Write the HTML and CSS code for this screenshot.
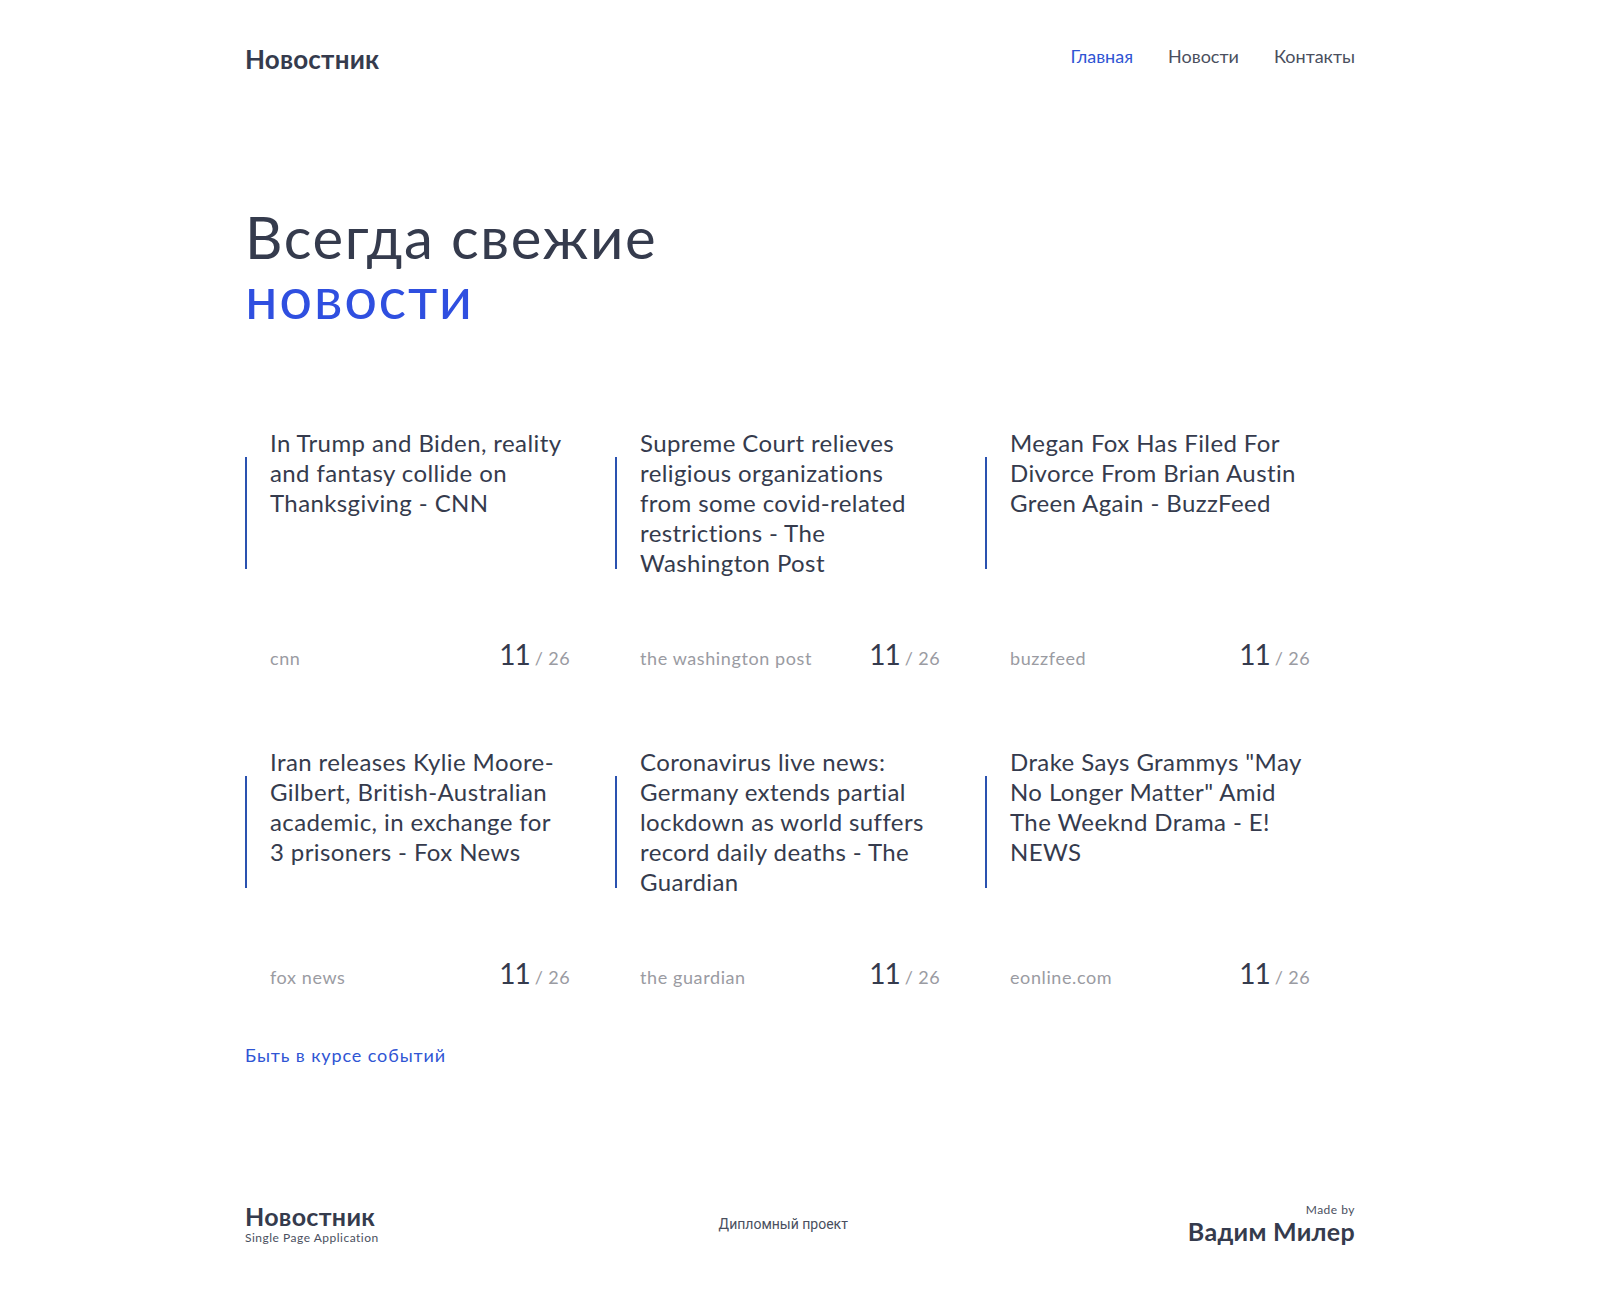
FILE: index.html
```html
<!DOCTYPE html>
<html lang="ru">
<head>
    <meta charset="UTF-8">
    <meta name="viewport" content="width=device-width, initial-scale=1.0">
    <title>Новостник</title>
    <link rel="stylesheet" href="styles.css">
</head>
<body>
    <div class="container">
        <header class="header">
            <a class="logo" href="#">Новостник</a>
            <nav class="nav">
                <a class="nav-link active" href="#">Главная</a>
                <a class="nav-link" href="#">Новости</a>
                <a class="nav-link" href="#">Контакты</a>
            </nav>
        </header>

        <section class="hero">
            <h1>Всегда свежие <span class="accent">новости</span></h1>
        </section>

        <section class="news">
            <article class="news-card">
                <h2 class="news-title">In Trump and Biden, reality and fantasy collide on Thanksgiving - CNN</h2>
                <div class="news-meta">
                    <span class="news-source">cnn</span>
                    <span class="news-date"><span class="day">11</span> / 26</span>
                </div>
            </article>
            <article class="news-card">
                <h2 class="news-title">Supreme Court relieves religious organizations from some covid-related restrictions - The Washington Post</h2>
                <div class="news-meta">
                    <span class="news-source">the washington post</span>
                    <span class="news-date"><span class="day">11</span> / 26</span>
                </div>
            </article>
            <article class="news-card">
                <h2 class="news-title">Megan Fox Has Filed For Divorce From Brian Austin Green Again - BuzzFeed</h2>
                <div class="news-meta">
                    <span class="news-source">buzzfeed</span>
                    <span class="news-date"><span class="day">11</span> / 26</span>
                </div>
            </article>
            <article class="news-card">
                <h2 class="news-title">Iran releases Kylie Moore-Gilbert, British-Australian academic, in exchange for 3 prisoners - Fox News</h2>
                <div class="news-meta">
                    <span class="news-source">fox news</span>
                    <span class="news-date"><span class="day">11</span> / 26</span>
                </div>
            </article>
            <article class="news-card">
                <h2 class="news-title">Coronavirus live news: Germany extends partial lockdown as world suffers record daily deaths - The Guardian</h2>
                <div class="news-meta">
                    <span class="news-source">the guardian</span>
                    <span class="news-date"><span class="day">11</span> / 26</span>
                </div>
            </article>
            <article class="news-card">
                <h2 class="news-title">Drake Says Grammys "May No Longer Matter" Amid The Weeknd Drama - E! NEWS</h2>
                <div class="news-meta">
                    <span class="news-source">eonline.com</span>
                    <span class="news-date"><span class="day">11</span> / 26</span>
                </div>
            </article>
        </section>

        <a class="more-link" href="#">Быть в курсе событий</a>

        <footer class="footer">
            <div class="footer-brand">
                <div class="footer-logo">Новостник</div>
                <div class="footer-sub">Single Page Application</div>
            </div>
            <div class="footer-note">Дипломный проект</div>
            <div class="footer-author">
                <div class="footer-sub">Made by</div>
                <div class="footer-name">Вадим Милер</div>
            </div>
        </footer>
    </div>
</body>
</html>
```

FILE: styles.css
```css
body {
    margin: 0;
    padding: 0;
    background-color: #fff;
    color: #353b4d;
    font-family: Lato, "Open Sans", sans-serif;
}

a {
    text-decoration: none;
}

.container {
    width: 1110px;
    margin: 0 auto;
}

/* header */

.header {
    display: flex;
    justify-content: space-between;
    align-items: flex-start;
    padding-top: 43px;
}

.logo {
    color: #353b4d;
    font-size: 26px;
    font-weight: 700;
    line-height: 32px;
    letter-spacing: 0.2px;
}

.nav {
    display: flex;
    gap: 35px;
    padding-top: 1px;
}

.nav-link {
    color: #4a4f5e;
    font-size: 18px;
    line-height: 24px;
}

.nav-link.active {
    color: #2f55d4;
}

/* hero */

.hero h1 {
    width: 480px;
    margin: 132px 0 0;
    font-size: 58px;
    font-weight: 400;
    line-height: 60px;
    letter-spacing: 1.6px;
    color: #353b4d;
}

.hero .accent {
    color: #2f4fe0;
}

/* news grid */

.news {
    display: grid;
    grid-template-columns: repeat(3, 1fr);
    row-gap: 76px;
    margin-top: 101px;
}

.news-card {
    position: relative;
    padding: 0 45px 0 25px;
}

.news-card::before {
    content: "";
    position: absolute;
    left: 0;
    top: 29px;
    width: 2px;
    height: 112px;
    background-color: #2a52b0;
}

.news-title {
    height: 150px;
    margin: 0;
    font-size: 24px;
    font-weight: 400;
    line-height: 30px;
    letter-spacing: 0.4px;
    color: #353b4d;
}

.news-meta {
    display: flex;
    justify-content: space-between;
    align-items: baseline;
    margin-top: 59px;
}

.news-source {
    font-size: 18px;
    letter-spacing: 0.6px;
    color: #9a9ba2;
}

.news-date {
    font-size: 18px;
    letter-spacing: 0.4px;
    color: #9a9ba2;
}

.news-date .day {
    font-size: 28px;
    letter-spacing: -1px;
    color: #353b4d;
}

.more-link {
    display: inline-block;
    margin-top: 54px;
    font-size: 18px;
    letter-spacing: 0.9px;
    color: #2f55d4;
}

/* footer */

.footer {
    display: flex;
    justify-content: space-between;
    align-items: center;
    margin-top: 136px;
    padding-bottom: 50px;
}

.footer-logo,
.footer-name {
    font-size: 25px;
    font-weight: 700;
    line-height: 28px;
    letter-spacing: 0.3px;
    color: #353b4d;
}

.footer-sub {
    font-size: 12px;
    letter-spacing: 0.5px;
    color: #4a4f5e;
}

.footer-note {
    font-family: Roboto, Arial, sans-serif;
    font-size: 14px;
    color: #4a4f5e;
}

.footer-author {
    text-align: right;
}
```
